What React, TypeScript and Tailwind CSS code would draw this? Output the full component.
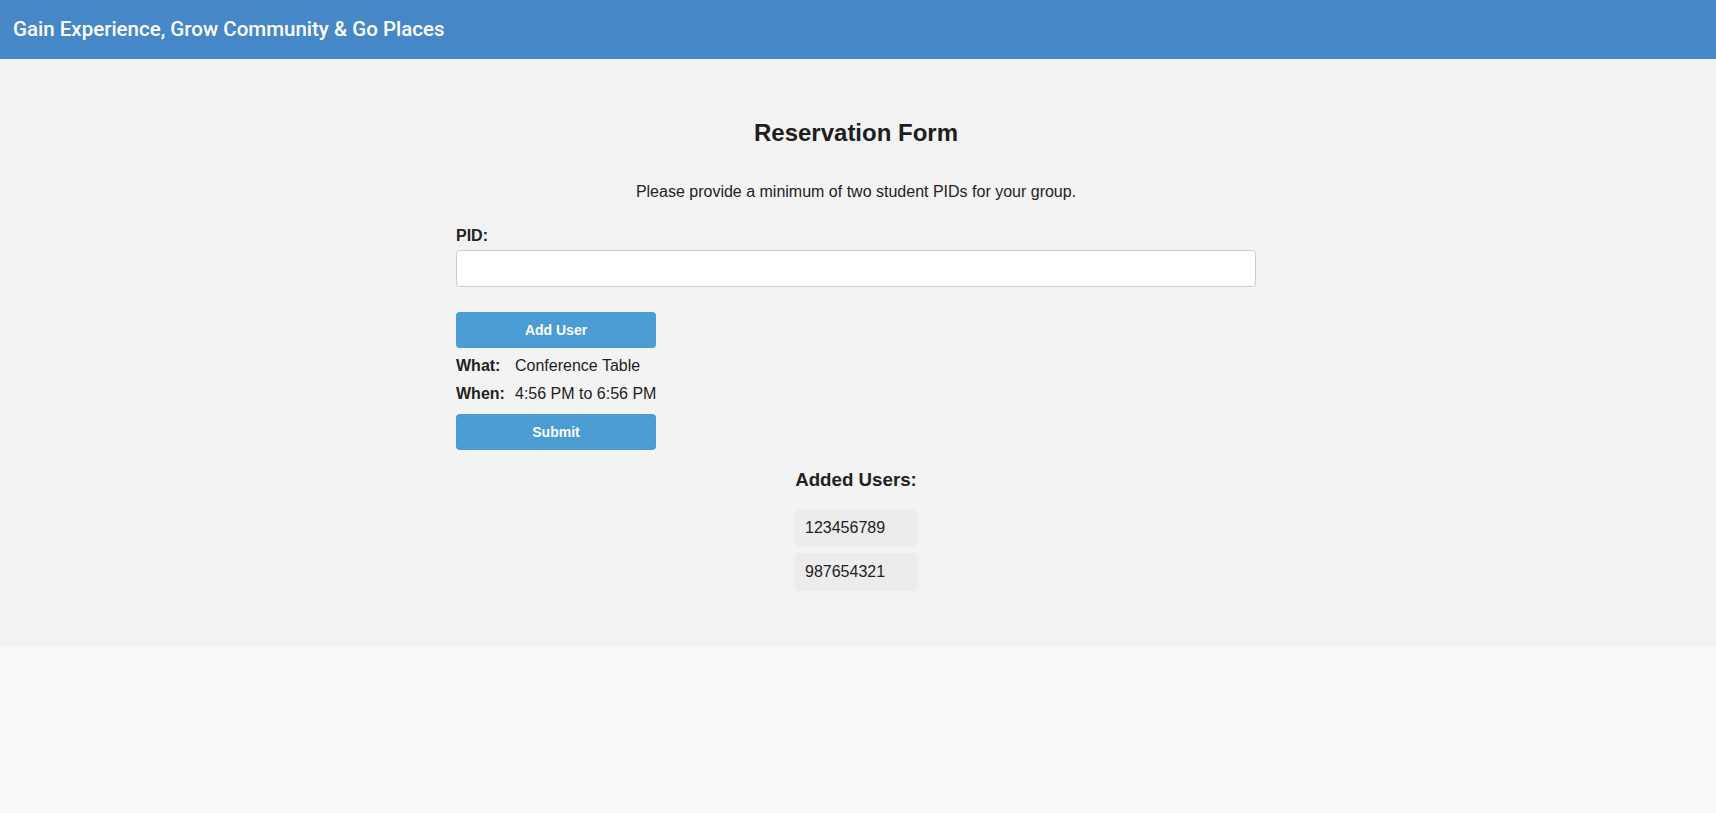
export default function App() {
  const users = ["123456789", "987654321"];

  return (
    <div className="min-h-[813px] bg-[#f9f9f9] font-['Liberation_Sans',Arial,sans-serif] text-[#222]">
      <header className="h-[59px] bg-[#4687c7] flex items-center pl-[13px]">
        <h1 className="font-['Roboto',sans-serif] text-[20.5px] font-medium text-white">
          Gain Experience, Grow Community &amp; Go Places
        </h1>
      </header>

      <main className="bg-[#f3f3f3] pt-[60px] pb-[56px] pr-[4px]">
        <div className="w-[800px] mx-auto">
          <h2 className="text-[24px] leading-[28px] font-bold text-center text-[#1e1e1e]">
            Reservation Form
          </h2>
          <p className="mt-[35px] text-[16px] leading-[20px] text-center">
            Please provide a minimum of two student PIDs for your group.
          </p>

          <label className="block mt-[24px] text-[16px] leading-[20px] font-bold">PID:</label>
          <input
            type="text"
            className="mt-[4px] block w-full h-[37px] bg-white border border-[#cccccc] rounded-[4px] px-2 outline-none"
          />

          <button className="mt-[25px] block w-[200px] h-[36px] rounded-[4px] bg-[#4b9cd3] text-white text-[14px] font-bold">
            Add User
          </button>

          <div className="mt-[4px] flex h-[28px] items-center text-[16px]">
            <span className="w-[59px] font-bold">What:</span>
            <span>Conference Table</span>
          </div>
          <div className="flex h-[28px] items-center text-[16px]">
            <span className="w-[59px] font-bold">When:</span>
            <span>4:56 PM to 6:56 PM</span>
          </div>

          <button className="mt-[6px] block w-[200px] h-[36px] rounded-[4px] bg-[#4b9cd3] text-white text-[14px] font-bold">
            Submit
          </button>

          <div className="mt-[19px] flex flex-col items-center">
            <h3 className="text-[18.72px] leading-[22px] font-bold">Added Users:</h3>
            <ul className="mt-[18px] flex flex-col gap-[6px]">
              {users.map((u) => (
                <li
                  key={u}
                  className="w-[122px] h-[38px] flex items-center pl-[10px] bg-[#ececec] rounded-[4px] text-[16px]"
                >
                  {u}
                </li>
              ))}
            </ul>
          </div>
        </div>
      </main>
    </div>
  );
}
